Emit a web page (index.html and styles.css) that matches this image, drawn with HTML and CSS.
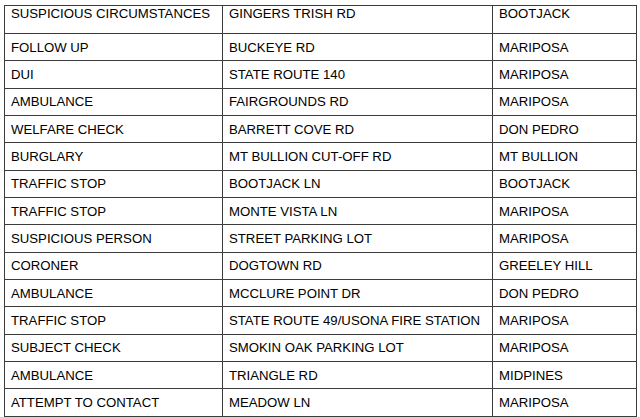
FILE: index.html
```html
<!DOCTYPE html>
<html>
<head>
<meta charset="utf-8">
<link rel="stylesheet" href="styles.css">
</head>
<body>
<table class="calls">
<colgroup><col class="c1"><col class="c2"><col class="c3"></colgroup>
<tr class="first"><td>SUSPICIOUS CIRCUMSTANCES</td><td>GINGERS TRISH RD</td><td>BOOTJACK</td></tr>
<tr><td>FOLLOW UP</td><td>BUCKEYE RD</td><td>MARIPOSA</td></tr>
<tr><td>DUI</td><td>STATE ROUTE 140</td><td>MARIPOSA</td></tr>
<tr><td>AMBULANCE</td><td>FAIRGROUNDS RD</td><td>MARIPOSA</td></tr>
<tr><td>WELFARE CHECK</td><td>BARRETT COVE RD</td><td>DON PEDRO</td></tr>
<tr><td>BURGLARY</td><td>MT BULLION CUT-OFF RD</td><td>MT BULLION</td></tr>
<tr><td>TRAFFIC STOP</td><td>BOOTJACK LN</td><td>BOOTJACK</td></tr>
<tr><td>TRAFFIC STOP</td><td>MONTE VISTA LN</td><td>MARIPOSA</td></tr>
<tr><td>SUSPICIOUS PERSON</td><td>STREET PARKING LOT</td><td>MARIPOSA</td></tr>
<tr><td>CORONER</td><td>DOGTOWN RD</td><td>GREELEY HILL</td></tr>
<tr><td>AMBULANCE</td><td>MCCLURE POINT DR</td><td>DON PEDRO</td></tr>
<tr><td>TRAFFIC STOP</td><td>STATE ROUTE 49/USONA FIRE STATION</td><td>MARIPOSA</td></tr>
<tr><td>SUBJECT CHECK</td><td>SMOKIN OAK PARKING LOT</td><td>MARIPOSA</td></tr>
<tr><td>AMBULANCE</td><td>TRIANGLE RD</td><td>MIDPINES</td></tr>
<tr><td>ATTEMPT TO CONTACT</td><td>MEADOW LN</td><td>MARIPOSA</td></tr>
</table>
</body>
</html>
```
FILE: styles.css
```css
html, body {
  margin: 0;
  padding: 0;
  background: #ffffff;
}
body {
  padding: 5px 0 0 4px;
  font-family: "Liberation Sans", Arial, sans-serif;
  font-size: 13.2px;
  color: #000;
}
.calls {
  border-collapse: collapse;
  table-layout: fixed;
  width: 632px;
}
.c1 { width: 218px; }
.c2 { width: 270px; }
.c3 { width: 144px; }
.calls td {
  border: 1px solid #3c3c3c;
  height: 27.33px;
  padding: 0 0 0 6px;
  box-sizing: border-box;
  vertical-align: middle;
  line-height: 15px;
  white-space: nowrap;
}
.calls tr.first td {
  height: 28px;
  vertical-align: top;
  padding-top: 0;
}
```
